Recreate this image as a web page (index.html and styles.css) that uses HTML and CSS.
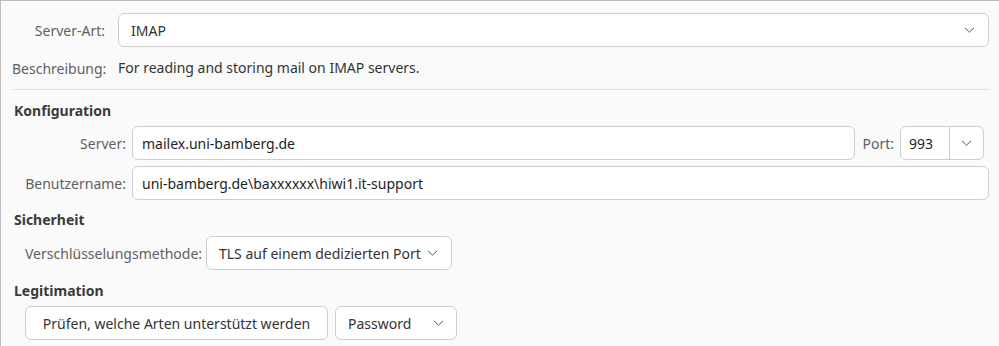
FILE: index.html
```html
<!DOCTYPE html>
<html lang="de">
<head>
    <meta charset="UTF-8">
    <title>Kontoeinstellungen</title>
    <link rel="stylesheet" href="styles.css">
</head>
<body>
    <div class="pane">
        <div class="type-grid">
            <span class="lbl">Server-Art:</span>
            <div class="combo combo-wide">
                <span>IMAP</span>
                <svg class="chevron" width="11" height="6" viewBox="0 0 11 6"><path d="M1 0.8l4.5 4.4 4.5-4.4"/></svg>
            </div>
            <span class="lbl">Beschreibung:</span>
            <span class="desc">For reading and storing mail on IMAP servers.</span>
        </div>

        <div class="sep"></div>

        <h3 class="section-title">Konfiguration</h3>
        <div class="config-grid">
            <span class="lbl">Server:</span>
            <div class="server-row">
                <div class="entry">mailex.uni-bamberg.de</div>
                <span class="lbl">Port:</span>
                <div class="spin">
                    <span class="spin-value">993</span>
                    <span class="spin-btn">
                        <svg class="chevron" width="11" height="6" viewBox="0 0 11 6"><path d="M1 0.8l4.5 4.4 4.5-4.4"/></svg>
                    </span>
                </div>
            </div>
            <span class="lbl">Benutzername:</span>
            <div class="entry">uni-bamberg.de\baxxxxxx\hiwi1.it-support</div>
        </div>

        <h3 class="section-title title-security">Sicherheit</h3>
        <div class="security-row">
            <span class="lbl">Verschlüsselungsmethode:</span>
            <div class="btn btn-tls">
                <span>TLS auf einem dedizierten Port</span>
                <svg class="chevron" width="11" height="6" viewBox="0 0 11 6"><path d="M1 0.8l4.5 4.4 4.5-4.4"/></svg>
            </div>
        </div>

        <h3 class="section-title title-auth">Legitimation</h3>
        <div class="auth-row">
            <div class="btn btn-check">Prüfen, welche Arten unterstützt werden</div>
            <div class="btn btn-method">
                <span>Password</span>
                <svg class="chevron" width="11" height="6" viewBox="0 0 11 6"><path d="M1 0.8l4.5 4.4 4.5-4.4"/></svg>
            </div>
        </div>
    </div>
</body>
</html>
```

FILE: styles.css
```css
:root {
    --bg: #fafafa;
    --frame: #bcbcbc;
    --border: #cdcdcd;
    --label: #5f5f5f;
    --text: #333;
    --title: #3b3b3b;
}

* {
    margin: 0;
    padding: 0;
    box-sizing: border-box;
}

body {
    font-family: "Noto Sans", "Open Sans", sans-serif;
    font-size: 14px;
    background: var(--bg);
    color: var(--text);
}

.pane {
    width: 999px;
    height: 346px;
    border-top: 1px solid var(--frame);
    border-left: 1px solid var(--frame);
    padding: 12px 10px 0 11px;
    overflow: hidden;
}

.lbl {
    color: var(--label);
    white-space: nowrap;
}

/* Server-Art / Beschreibung */
.type-grid {
    display: grid;
    grid-template-columns: 93px 1fr;
    column-gap: 13px;
    row-gap: 11px;
    align-items: center;
}

.type-grid .lbl:first-child {
    text-align: right;
}

.desc {
    line-height: 20px;
    color: var(--text);
}

.combo,
.btn,
.entry,
.spin {
    height: 34px;
    background: #fff;
    border: 1px solid var(--border);
    border-radius: 6px;
    display: flex;
    align-items: center;
}

.combo-wide {
    justify-content: space-between;
    padding: 0 13px 0 12px;
    color: var(--text);
}

.chevron {
    fill: none;
    stroke: #555;
    stroke-width: 1;
    flex: none;
}

.sep {
    height: 1px;
    background: #dedede;
    margin: 11px 0 0 1px;
}

.section-title {
    font-size: 14px;
    font-weight: 700;
    color: var(--title);
    line-height: 20px;
    margin: 11px 0 0 2px;
}

/* Konfiguration */
.config-grid {
    display: grid;
    grid-template-columns: 102px 1fr;
    column-gap: 6px;
    row-gap: 6px;
    align-items: center;
    margin-top: 5px;
    padding-left: 12px;
}

.config-grid > .lbl {
    text-align: right;
}

.entry {
    padding-left: 9px;
    color: #1e1e1e;
}

.server-row {
    display: flex;
    align-items: center;
    gap: 6px;
    margin-right: 5px;
}

.server-row .entry {
    flex: 1;
    margin-right: 1px;
}

.spin {
    width: 84px;
    flex: none;
}

.spin-value {
    width: 48px;
    padding-left: 8px;
    color: #1e1e1e;
}

.spin-btn {
    flex: 1;
    height: 100%;
    border-left: 1px solid var(--border);
    display: flex;
    align-items: center;
    justify-content: center;
}

/* Sicherheit */
.title-security {
    margin-top: 10px;
}

.security-row {
    display: grid;
    grid-template-columns: 174px 246px;
    column-gap: 7px;
    align-items: center;
    margin-top: 6px;
    padding-left: 13px;
}

.security-row .lbl {
    text-align: right;
}

.btn {
    color: #333;
}

.btn-tls {
    padding: 0 13px 0 12px;
    gap: 6px;
    justify-content: space-between;
}

/* Legitimation */
.title-auth {
    margin-top: 11px;
}

.auth-row {
    display: flex;
    gap: 7px;
    margin-top: 5px;
    padding-left: 13px;
}

.btn-check {
    width: 303px;
    justify-content: center;
}

.btn-method {
    width: 122px;
    padding: 0 12px 0 12px;
    justify-content: space-between;
}
```
